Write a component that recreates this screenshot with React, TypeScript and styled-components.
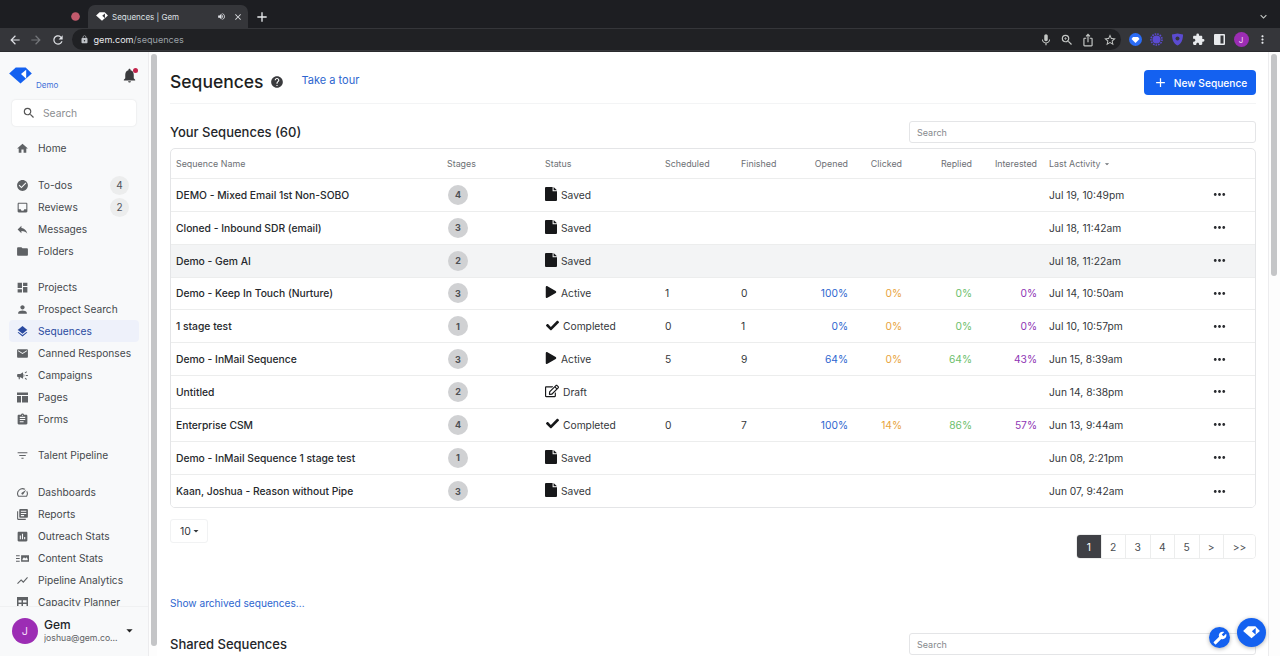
import React from "react";
import styled, { createGlobalStyle } from "styled-components";
import {
  MdHome, MdCheckCircle, MdInbox, MdReply, MdFolder, MdDashboard, MdPerson, MdLayers, MdEmail, MdCampaign,
  MdAssignment, MdFilterList, MdSpeed, MdLibraryBooks, MdAssessment, MdShowChart,
  MdSearch, MdHelp, MdNotifications, MdAdd, MdArrowBack, MdArrowForward, MdRefresh, MdLock, MdMic, MdZoomIn,
  MdIosShare, MdStarBorder, MdExtension, MdMoreVert, MdClose, MdVolumeUp, MdExpandMore, MdBuild, MdArrowDropDown,
  MdMoreHoriz, MdFiberManualRecord,
} from "react-icons/md";
import { FaPlay, FaCheck, FaRegEdit } from "react-icons/fa";

const Global = createGlobalStyle`
  html, body { margin: 0; padding: 0; height: 100%; overflow: hidden; background: #fff; }
  #root { height: 656px; }
  * { box-sizing: border-box; }
  body { font-family: Inter, "Liberation Sans", sans-serif; color: #212529; }
`;

const Page = styled.div`
  width: 1280px; height: 656px; display: flex; flex-direction: column; overflow: hidden; position: relative;
`;
const TabStrip = styled.div`
  height: 28px; flex: none; background: #1d1e22; display: flex; align-items: flex-end; padding-left: 65px; color: #dfe1e5;
`;
const Recording = styled.div`
  width: 20px; height: 24px; display: flex; align-items: center; justify-content: center; color: #c25a6c; font-size: 13px; margin-right: 3px;
`;
const Tab = styled.div`
  width: 160px; height: 23px; background: #35363a; border-radius: 7px 7px 0 0; display: flex; align-items: center;
  padding: 0 0 0 8px; font-size: 8px; color: #dfe1e5; gap: 4px;
`;
const TabTitle = styled.span`flex: 1; white-space: nowrap;`;
const TabTail = styled.div`display: flex; align-items: center; gap: 7px; padding-right: 5px; font-size: 9px;`;
const NewTab = styled.div`width: 28px; height: 23px; display: flex; align-items: center; justify-content: center; font-size: 16px; color: #e8eaed;`;
const StripEnd = styled.div`margin-left: auto; width: 24px; margin-right: 5px; height: 24px; display: flex; align-items: center; justify-content: center; color: #c4c7c5; font-size: 13px;`;
const Toolbar = styled.div`
  height: 24px; flex: none; background: #35363a; display: flex; align-items: center; padding: 0 0 0 4px; color: #dfe1e5; font-size: 15px; border-bottom: 1px solid #2a2b2e;
`;
const NavIcon = styled.span<{ $dim?: boolean }>`
  width: 21.5px; flex: none; display: flex; align-items: center; justify-content: center; color: ${p => (p.$dim ? "#75777b" : "#dfe1e5")}; font-size: 14px;
`;
const Omnibox = styled.div`
  margin-left: 3px; width: 1049px; height: 21px; background: #202124; border-radius: 11px; display: flex; align-items: center; padding-left: 8px; font-size: 9.1px; color: #e8eaed; flex: none;
`;
const Url = styled.span`margin-left: 5px; flex: 1; span { color: #9aa0a6; }`;
const OmniIcons = styled.div`display: flex; align-items: center; gap: 7.3px; padding-right: 4px; color: #c4c7c5; font-size: 14px;`;
const Extensions = styled.div`display: flex; align-items: center; margin-left: 4px;`;
const ExtSlot = styled.span`width: 21.2px; display: flex; align-items: center; justify-content: center; flex: none;`;
const Body = styled.div`flex: 1; min-height: 0; display: flex;`;
const Sidebar = styled.aside`
  width: 148px; flex: none; background: #f8f9fa; display: flex; flex-direction: column; overflow: hidden;
`;
const SideHead = styled.div`height: 48px; flex: none; display: flex; padding: 15px 10px 0 9px; justify-content: space-between;`;
const Brand = styled.div`display: flex; align-items: flex-start; position: relative; width: 50px;`;
const DemoTag = styled.span`font-size: 8px; color: #3e6fd8; position: absolute; left: 27px; top: 13px;`;
const Bell = styled.div`color: #3a3b3d; font-size: 17px; position: relative; height: 18px;`;
const BellDot = styled.span`position: absolute; right: 0; top: 1px; width: 5px; height: 5px; border-radius: 50%; background: #c3244b;`;
const SideSearch = styled.div`
  margin: 0 12px; height: 26px; flex: none; background: #fff; border-radius: 4px; box-shadow: 0 0 2px rgba(0,0,0,.12);
  display: flex; align-items: center; padding-left: 10px; font-size: 10.3px; color: #8a8d90; gap: 7px; svg { font-size: 14px; color: #555; }
`;
const Nav = styled.nav`flex: 1; min-height: 0; overflow: hidden; padding: 11px 9px 0 9px;`;
const NavGroup = styled.div`
  margin-bottom: 14px;
  &:first-child { margin-bottom: 15px; }
  &:nth-child(4) { margin-bottom: 15px; }
`;
const NavItem = styled.div<{ $active?: boolean }>`
  height: 22px; display: flex; align-items: center; padding-left: 7px; border-radius: 4px; font-size: 10.2px; white-space: nowrap;
  background: ${p => (p.$active ? "#eef1fa" : "transparent")}; color: ${p => (p.$active ? "#2a4aa0" : "#45484c")};
  svg { width: 13px; height: 13px; color: ${p => (p.$active ? "#2a4aa0" : "#5f6265")}; flex: none; margin-right: 9px; }
`;
const Count = styled.span`
  margin-left: auto; margin-right: 10px; width: 19px; height: 19px; border-radius: 50%; background: #eceded; display: flex; align-items: center; justify-content: center; font-size: 10px; color: #50535a;
`;
const SideFoot = styled.div`
  height: 50px; flex: none; display: flex; align-items: center; padding: 0 14px 2px 12px; background: #f8f9fa; border-top: 1px solid #f0f1f2;
`;
const Avatar = styled.div<{ $small?: boolean }>`
  width: ${p => (p.$small ? 15 : 26)}px; height: ${p => (p.$small ? 15 : 26)}px; border-radius: 50%; background: #9c2db4; color: #f3d9f7;
  font-size: ${p => (p.$small ? 8 : 11)}px; display: flex; align-items: center; justify-content: center; flex: none;
`;
const FootText = styled.div`margin-left: 6px; flex: 1; line-height: 1.1; overflow: hidden;`;
const FootName = styled.div`font-size: 12px; font-weight: 500; color: #212529; line-height: 15px;`;
const FootMail = styled.div`font-size: 8.7px; color: #5f6265; line-height: 13px;`;
const FootCaret = styled.div`font-size: 15px; color: #222; display: flex; margin-right: -3px;`;
const Rail = styled.div<{ $w: number }>`
  width: ${p => p.$w}px; flex: none; background: #fdfdfd; border-left: 1px solid #ececee; padding: 2px 0 0 2px;
`;
const Thumb = styled.div<{ $h: number }>`width: 6px; height: ${p => p.$h}px; background: #c4c5c7; border-radius: 3px;`;
const Main = styled.main`flex: 1; min-width: 0; overflow: hidden; padding: 0 12px 0 13px; background: #fff;`;
const Head = styled.div`
  height: 52px; display: flex; align-items: center; border-bottom: 1px solid #f3f4f5; padding-top: 8px;
`;
const Title = styled.h1`margin: 0; font-size: 17.5px; font-weight: 500; color: #1c1e21; line-height: 1;`;
const Help = styled.span`margin-left: 6px; color: #3a3b3e; font-size: 14px; display: flex;`;
const Tour = styled.a`margin-left: 18px; font-size: 11px; color: #2d66cf; margin-top: -3px;`;
const NewBtn = styled.button`
  margin-left: auto; margin-top: 2px; width: 112px; height: 25px; border: 0; border-radius: 4px; background: #1461f0; color: #fff; font: 500 10.2px Inter, sans-serif;
  display: flex; align-items: center; justify-content: center; gap: 6px; svg { font-size: 15px; }
`;
const SectionHead = styled.div<{ $top: number }>`
  display: flex; align-items: center; justify-content: space-between; margin-top: ${p => p.$top}px; height: 22px;
`;
const SectionTitle = styled.h2`margin: 0; font-size: 13px; font-weight: 500; color: #23262a;`;
const TableSearch = styled.div`
  width: 347px; height: 22px; border: 1px solid #e4e5e7; border-radius: 3px; font-size: 9px; color: #85888c; display: flex; align-items: center; padding-left: 7px; background: #fff;
`;
const Table = styled.div`
  margin-top: 5px; border: 1px solid #e4e5e7; border-radius: 5px; overflow: hidden;
`;
const COLS = "276px 98px 120px 76px 49px 58px 54px 70px 65px 170px 1fr";
const HeadRow = styled.div`
  display: grid; grid-template-columns: ${COLS}; height: 30px; padding-bottom: 1px; align-items: center; font-size: 8.9px; color: #6d7075; border-bottom: 1px solid #eceded;
`;
const Row = styled.div<{ $hover?: boolean }>`
  display: grid; grid-template-columns: ${COLS}; height: 32.85px; align-items: center; font-size: 10.25px; color: #34373b;
  border-bottom: 1px solid #eceded; background: ${p => (p.$hover ? "#f3f4f5" : "#fff")};
  &:last-child { border-bottom: 0; }
`;
const Cell = styled.div<{ $right?: boolean; $pad?: number; $color?: string }>`
  text-align: ${p => (p.$right ? "right" : "left")}; padding-left: ${p => p.$pad ?? 0}px; color: ${p => p.$color ?? "inherit"}; white-space: nowrap;
`;
const SortCaret = styled.span`display: inline-flex; vertical-align: -2px; margin-left: 1px; font-size: 10px;`;
const Name = styled(Cell)`font-weight: 500; font-size: 10.3px; color: #26292d; padding-left: 5px;`;
const Stage = styled.span`
  width: 20px; height: 20px; margin-left: 1px; border-radius: 50%; background: #d0d1d3; display: flex; align-items: center; justify-content: center; font-size: 9px; font-weight: 700; color: #4d4f53;
`;
const Status = styled.div`display: flex; align-items: center; gap: 4px; svg { color: #17181a; flex: none; margin-top: -2px; }`;
const CheckBox = styled.span`display: flex; padding-left: 1px;`;
const Actions = styled.div`display: flex; font-size: 17px; color: #2a2c30; margin-left: 4px;`;
const Footer = styled.div`display: flex; justify-content: space-between; align-items: flex-start; margin-top: 11px; height: 75px;`;
const PageSize = styled.div`
  width: 38px; height: 24px; border: 1px solid #f1f2f3; border-radius: 3px; display: flex; align-items: center; padding-left: 9px; font-size: 10.5px; color: #34373b; svg { font-size: 12px; margin-left: -1px; }
`;
const Pager = styled.div`display: flex; margin-top: 15px; border: 1px solid #eceded; border-radius: 4px; overflow: hidden;`;
const PageBtn = styled.div<{ $on?: boolean; $w?: number }>`
  width: ${p => p.$w ?? 24.5}px; height: 23px; display: flex; align-items: center; justify-content: center; font-size: 10.3px;
  background: ${p => (p.$on ? "#3f4045" : "#fff")}; color: ${p => (p.$on ? "#fff" : "#4a4d52")}; border-right: 1px solid #eceded; &:last-child { border-right: 0; }
`;
const Archived = styled.a`display: block; margin-top: 3px; font-size: 10.15px; color: #2d66cf;`;
const Floating = styled.div`position: absolute; border-radius: 50%; background: #1461f0; display: flex; align-items: center; justify-content: center; color: #fff; box-shadow: 0 1px 4px rgba(0,0,0,.3);`;
const Wrench = styled(Floating)`left: 1209px; top: 627px; width: 21px; height: 21px; font-size: 14px; svg { transform: scaleX(-1); }`;
const GemFab = styled(Floating)`left: 1237px; top: 618px; width: 29px; height: 29px;`;

const Gem = ({ size = 24, color = "#1461f0", cut = "#fff" }: { size?: number; color?: string; cut?: string }) => (
  <svg width={size} height={size * 0.72} viewBox="0 0 24 17.5">
    <path d="M7 .5h10.5L24 7 12 17.5 0 7z" fill={color} />
    <path d="M12.5 7.5 18 3v9.5z" fill={cut} />
  </svg>
);
const PagesIcon = () => (
  <svg viewBox="0 0 13 13"><path d="M1 1.5h11v2.5H1zM1 5h4v6.5H1zM6 5h6v6.5H6z" fill="currentColor" /></svg>
);
const ContentStatsIcon = () => (
  <svg viewBox="0 0 14 13"><path d="M0 3h4v1.2H0zM0 5.9h4v1.2H0zM0 8.8h4v1.2H0zM5.5 3H14v7H5.5zM7 7l1.6-1.8L10 6.4l1.2-1.2L12.6 7v1.3H7z" fill="currentColor" fillRule="evenodd" /></svg>
);
const PlannerIcon = () => (
  <svg viewBox="0 0 13 13"><path d="M1 1h11v11H1zM2.5 4.2v2.3h3V4.2zM7 4.2v2.3h3.5V4.2zM2.5 8v2.5h3V8zM7 8v2.5h3.5V8z" fill="currentColor" fillRule="evenodd" /></svg>
);
const FileIcon = () => (
  <svg width="12" height="14" viewBox="0 0 12 14"><path d="M0 1a1 1 0 0 1 1-1h6.6v4.2H12V13a1 1 0 0 1-1 1H1a1 1 0 0 1-1-1zM8.6 0 12 3.2H8.6z" fill="currentColor" /></svg>
);

const groups: { icon: React.ReactNode; label: string; count?: number; active?: boolean }[][] = [
  [{ icon: <MdHome />, label: "Home" }],
  [
    { icon: <MdCheckCircle />, label: "To-dos", count: 4 },
    { icon: <MdInbox />, label: "Reviews", count: 2 },
    { icon: <MdReply />, label: "Messages" },
    { icon: <MdFolder />, label: "Folders" },
  ],
  [
    { icon: <MdDashboard />, label: "Projects" },
    { icon: <MdPerson />, label: "Prospect Search" },
    { icon: <MdLayers />, label: "Sequences", active: true },
    { icon: <MdEmail />, label: "Canned Responses" },
    { icon: <MdCampaign />, label: "Campaigns" },
    { icon: <PagesIcon />, label: "Pages" },
    { icon: <MdAssignment />, label: "Forms" },
  ],
  [{ icon: <MdFilterList />, label: "Talent Pipeline" }],
  [
    { icon: <MdSpeed />, label: "Dashboards" },
    { icon: <MdLibraryBooks />, label: "Reports" },
    { icon: <MdAssessment />, label: "Outreach Stats" },
    { icon: <ContentStatsIcon />, label: "Content Stats" },
    { icon: <MdShowChart />, label: "Pipeline Analytics" },
    { icon: <PlannerIcon />, label: "Capacity Planner" },
  ],
];

type Kind = "Saved" | "Active" | "Completed" | "Draft";
const rows: { name: string; stages: number; status: Kind; sch?: number; fin?: number; op?: string; cl?: string; re?: string; int?: string; date: string; hover?: boolean }[] = [
  { name: "DEMO - Mixed Email 1st Non-SOBO", stages: 4, status: "Saved", date: "Jul 19, 10:49pm" },
  { name: "Cloned - Inbound SDR (email)", stages: 3, status: "Saved", date: "Jul 18, 11:42am" },
  { name: "Demo - Gem AI", stages: 2, status: "Saved", date: "Jul 18, 11:22am", hover: true },
  { name: "Demo - Keep In Touch (Nurture)", stages: 3, status: "Active", sch: 1, fin: 0, op: "100%", cl: "0%", re: "0%", int: "0%", date: "Jul 14, 10:50am" },
  { name: "1 stage test", stages: 1, status: "Completed", sch: 0, fin: 1, op: "0%", cl: "0%", re: "0%", int: "0%", date: "Jul 10, 10:57pm" },
  { name: "Demo - InMail Sequence", stages: 3, status: "Active", sch: 5, fin: 9, op: "64%", cl: "0%", re: "64%", int: "43%", date: "Jun 15, 8:39am" },
  { name: "Untitled", stages: 2, status: "Draft", date: "Jun 14, 8:38pm" },
  { name: "Enterprise CSM", stages: 4, status: "Completed", sch: 0, fin: 7, op: "100%", cl: "14%", re: "86%", int: "57%", date: "Jun 13, 9:44am" },
  { name: "Demo - InMail Sequence 1 stage test", stages: 1, status: "Saved", date: "Jun 08, 2:21pm" },
  { name: "Kaan, Joshua - Reason without Pipe", stages: 3, status: "Saved", date: "Jun 07, 9:42am" },
];

const statusIcon = (k: Kind) => {
  if (k === "Saved") return <FileIcon />;
  if (k === "Active") return <FaPlay size={12} />;
  if (k === "Completed") return <CheckBox><FaCheck size={13} /></CheckBox>;
  return <FaRegEdit size={14} />;
};

export default function App() {
  return (
    <Page>
      <Global />
      <TabStrip>
        <Recording><MdFiberManualRecord /></Recording>
        <Tab>
          <Gem size={12} color="#fff" cut="#35363a" />
          <TabTitle>Sequences | Gem</TabTitle>
          <TabTail><MdVolumeUp /><MdClose size={10} /></TabTail>
        </Tab>
        <NewTab><MdAdd /></NewTab>
        <StripEnd><MdExpandMore /></StripEnd>
      </TabStrip>
      <Toolbar>
        <NavIcon><MdArrowBack /></NavIcon>
        <NavIcon $dim><MdArrowForward /></NavIcon>
        <NavIcon><MdRefresh /></NavIcon>
        <Omnibox>
          <MdLock size={9} color="#bdc1c6" />
          <Url>gem.com<span>/sequences</span></Url>
          <OmniIcons><MdMic /><MdZoomIn /><MdIosShare /><MdStarBorder /></OmniIcons>
        </Omnibox>
        <Extensions>
          <ExtSlot>
            <svg width="13" height="13" viewBox="0 0 13 13"><circle cx="6.5" cy="6.5" r="6.5" fill="#2b6cf6" /><path d="M4 4h5l1.5 2L6.5 10 2.5 6z" fill="#fff" /></svg>
          </ExtSlot>
          <ExtSlot>
            <svg width="13" height="13" viewBox="0 0 13 13"><circle cx="6.5" cy="6.5" r="4" fill="#5b4bd1" /><circle cx="6.5" cy="6.5" r="5.5" fill="none" stroke="#5b4bd1" strokeWidth="1.6" strokeDasharray="1.6 1" /></svg>
          </ExtSlot>
          <ExtSlot>
            <svg width="13" height="13" viewBox="0 0 13 13"><path d="M1 1.5 6.5.5l5.500 1c0 5-1.500 9-5.500 11C2.500 10.500 1 6.500 1 1.500z" fill="#5b4bd1" /><circle cx="6.500" cy="5.500" r="2" fill="#35363a" /></svg>
          </ExtSlot>
          <ExtSlot><MdExtension color="#e8eaed" size={13} /></ExtSlot>
          <ExtSlot>
            <svg width="11" height="11" viewBox="0 0 11 11"><rect width="11" height="11" rx="1" fill="#e8eaed" /><rect x="6.500" y="1.500" width="3" height="8" fill="#35363a" /></svg>
          </ExtSlot>
          <ExtSlot><Avatar $small>J</Avatar></ExtSlot>
          <ExtSlot><MdMoreVert color="#e8eaed" size={13} /></ExtSlot>
        </Extensions>
      </Toolbar>
      <Body>
        <Sidebar>
          <SideHead>
            <Brand><Gem size={23} /><DemoTag>Demo</DemoTag></Brand>
            <Bell><MdNotifications /><BellDot /></Bell>
          </SideHead>
          <SideSearch><MdSearch />Search</SideSearch>
          <Nav>
            {groups.map((g, i) => (
              <NavGroup key={i}>
                {g.map(it => (
                  <NavItem key={it.label} $active={it.active}>
                    {it.icon}{it.label}
                    {it.count ? <Count>{it.count}</Count> : null}
                  </NavItem>
                ))}
              </NavGroup>
            ))}
          </Nav>
          <SideFoot>
            <Avatar>J</Avatar>
            <FootText>
              <FootName>Gem</FootName>
              <FootMail>joshua@gem.co...</FootMail>
            </FootText>
            <FootCaret><MdArrowDropDown /></FootCaret>
          </SideFoot>
        </Sidebar>
        <Rail $w={9}><Thumb $h={592} /></Rail>
        <Main>
          <Head>
            <Title>Sequences</Title>
            <Help><MdHelp /></Help>
            <Tour>Take a tour</Tour>
            <NewBtn><MdAdd />New Sequence</NewBtn>
          </Head>
          <SectionHead $top={17}>
            <SectionTitle>Your Sequences (60)</SectionTitle>
            <TableSearch>Search</TableSearch>
          </SectionHead>
          <Table>
            <HeadRow>
              <Cell $pad={5}>Sequence Name</Cell>
              <Cell>Stages</Cell>
              <Cell>Status</Cell>
              <Cell>Scheduled</Cell>
              <Cell>Finished</Cell>
              <Cell $right>Opened</Cell>
              <Cell $right>Clicked</Cell>
              <Cell $right>Replied</Cell>
              <Cell $right>Interested</Cell>
              <Cell $pad={12}>Last Activity<SortCaret><MdArrowDropDown /></SortCaret></Cell>
              <Cell />
            </HeadRow>
            {rows.map(r => (
              <Row key={r.name} $hover={r.hover}>
                <Name>{r.name}</Name>
                <Cell><Stage>{r.stages}</Stage></Cell>
                <Cell><Status>{statusIcon(r.status)} {r.status}</Status></Cell>
                <Cell>{r.sch}</Cell>
                <Cell>{r.fin}</Cell>
                <Cell $right $color="#2d66cf">{r.op}</Cell>
                <Cell $right $color="#e8a33d">{r.cl}</Cell>
                <Cell $right $color="#6cc06c">{r.re}</Cell>
                <Cell $right $color="#8e35b4">{r.int}</Cell>
                <Cell $pad={12}>{r.date}</Cell>
                <Actions><MdMoreHoriz /></Actions>
              </Row>
            ))}
          </Table>
          <Footer>
            <PageSize>10<MdArrowDropDown /></PageSize>
            <Pager>
              <PageBtn $on>1</PageBtn>
              <PageBtn>2</PageBtn>
              <PageBtn>3</PageBtn>
              <PageBtn>4</PageBtn>
              <PageBtn>5</PageBtn>
              <PageBtn>&gt;</PageBtn>
              <PageBtn $w={31}>&gt;&gt;</PageBtn>
            </Pager>
          </Footer>
          <Archived>Show archived sequences...</Archived>
          <SectionHead $top={24}>
            <SectionTitle>Shared Sequences</SectionTitle>
            <TableSearch>Search</TableSearch>
          </SectionHead>
        </Main>
        <Rail $w={12}><Thumb $h={222} /></Rail>
      </Body>
      <Wrench><MdBuild /></Wrench>
      <GemFab><Gem size={17} color="#fff" cut="#1461f0" /></GemFab>
    </Page>
  );
}
